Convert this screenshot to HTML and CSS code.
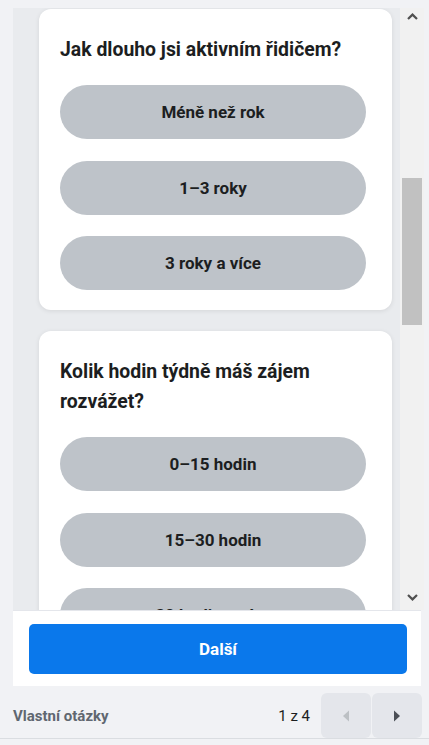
FILE: index.html
```html
<!DOCTYPE html>
<html lang="cs">
<head>
<meta charset="utf-8">
<title>Vlastní otázky</title>
<link rel="stylesheet" href="styles.css">
</head>
<body>
<div class="app">
  <div class="top-gap"></div>
  <div class="main">
    <div class="scroll">
      <div class="card first">
        <h2 class="title">Jak dlouho jsi aktivním řidičem?</h2>
        <div class="options">
          <button class="option">Méně než rok</button>
          <button class="option">1–3 roky</button>
          <button class="option">3 roky a více</button>
        </div>
      </div>
      <div class="card">
        <h2 class="title">Kolik hodin týdně máš zájem rozvážet?</h2>
        <div class="options">
          <button class="option">0–15 hodin</button>
          <button class="option">15–30 hodin</button>
          <button class="option">30 hodin a více</button>
        </div>
      </div>
    </div>
    <div class="scrollbar">
      <div class="sb-arrow up">
        <svg width="11" height="7" viewBox="0 0 11 7"><path d="M1 6 L5.5 1.6 L10 6" fill="none" stroke="#505050" stroke-width="2.2"/></svg>
      </div>
      <div class="sb-track"><div class="sb-thumb"></div></div>
      <div class="sb-arrow down">
        <svg width="11" height="7" viewBox="0 0 11 7"><path d="M1 1 L5.5 5.4 L10 1" fill="none" stroke="#505050" stroke-width="2.2"/></svg>
      </div>
    </div>
  </div>
  <div class="footer">
    <button class="next">Další</button>
  </div>
  <div class="bottombar">
    <span class="section">Vlastní otázky</span>
    <span class="pager">1 z 4</span>
    <div class="navs">
      <button class="nav">
        <svg width="8" height="12" viewBox="0 0 8 12"><path d="M7 0.5 L7 11.5 L1 6 Z" fill="#bcc0c4"/></svg>
      </button>
      <button class="nav">
        <svg width="8" height="12" viewBox="0 0 8 12"><path d="M1 0.5 L1 11.5 L7 6 Z" fill="#4b4f56"/></svg>
      </button>
    </div>
  </div>
</div>
</body>
</html>
```
FILE: styles.css
```css
* { box-sizing: border-box; }
html, body {
  margin: 0;
  padding: 0;
  background: #f1f2f5;
  font-family: Roboto, "Liberation Sans", Arial, sans-serif;
}
.app {
  width: 429px;
  height: 745px;
  display: flex;
  flex-direction: column;
  overflow: hidden;
}
.top-gap { height: 8px; flex: none; }
.main {
  display: flex;
  height: 602px;
  margin-left: 13px;
  width: 411px;
  flex: none;
}
.scroll {
  flex: 1;
  background: #e9ebee;
  overflow: hidden;
  padding: 1px 8px 0 26px;
}
.card {
  background: #fff;
  border-radius: 12px;
  box-shadow: 0 1px 5px rgba(0, 0, 0, 0.09);
  padding: 26px 26px 20px 21px;
  margin-bottom: 21px;
}
.title {
  margin: 0 0 20px;
  font-size: 19.4px;
  line-height: 30px;
  font-weight: 700;
  color: #1c1e21;
}
.options {
  display: flex;
  flex-direction: column;
  gap: 21.5px;
}
.option {
  height: 54px;
  flex: none;
  border: none;
  border-radius: 27px;
  background: #bec3c9;
  font-family: inherit;
  font-size: 17px;
  font-weight: 700;
  color: #1c1e21;
  padding: 0;
}
.scrollbar {
  width: 24px;
  flex: none;
  background: #f1f1f1;
  display: flex;
  flex-direction: column;
}
.sb-arrow {
  display: flex;
  justify-content: center;
  align-items: center;
  flex: none;
}
.sb-arrow.up { height: 15px; padding-top: 1px; }
.sb-arrow.down { height: 24px; margin-top: auto; padding-bottom: 1px; }
.sb-track {
  padding-top: 155px;
}
.sb-thumb {
  height: 147px;
  margin: 0 2px 0 2px;
  background: #c1c1c1;
}
.footer {
  margin-left: 13px;
  width: 408px;
  height: 76px;
  flex: none;
  background: #fff;
  border-top: 1px solid #e4e6eb;
  padding: 13px 14px 0 16px;
}
.next {
  width: 100%;
  height: 50px;
  border: none;
  border-radius: 5px;
  background: #0a78eb;
  color: #fff;
  font-family: inherit;
  font-size: 17px;
  font-weight: 700;
}
.bottombar {
  height: 53px;
  flex: none;
  display: flex;
  align-items: flex-end;
  border-bottom: 1px solid #dadde1;
  padding-left: 13px;
}
.section {
  font-size: 15px;
  font-weight: 700;
  color: #606770;
  align-self: center;
  margin-top: 7px;
}
.pager {
  margin-left: auto;
  font-size: 15px;
  color: #1c1e21;
  align-self: center;
  margin-top: 7px;
  margin-right: 11px;
}
.navs {
  display: flex;
  gap: 1px;
  margin-right: 7px;
}
.nav {
  width: 50px;
  height: 45px;
  border: none;
  border-radius: 6px;
  background: #e4e6eb;
  display: flex;
  align-items: center;
  justify-content: center;
  padding: 0;
}
```
